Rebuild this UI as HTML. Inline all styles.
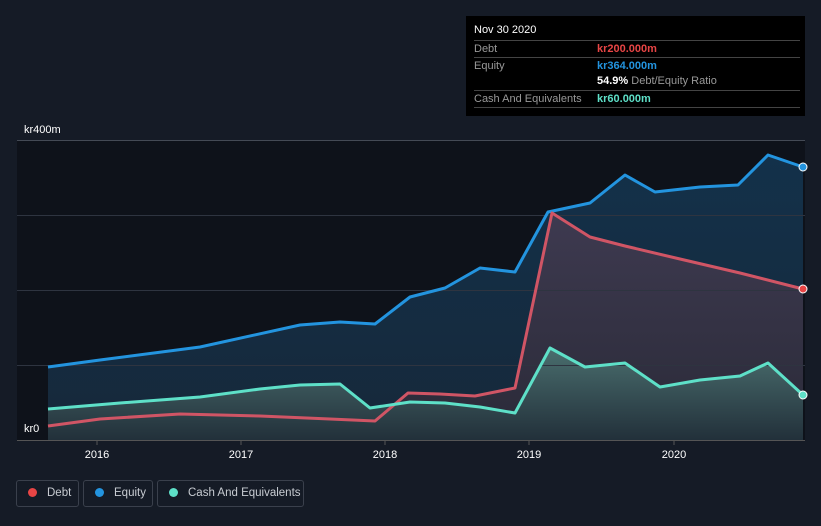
<!DOCTYPE html><html><head><style>
body{margin:0;width:821px;height:526px;background:#151b26;font-family:"Liberation Sans",sans-serif;overflow:hidden;position:relative}
.tt{position:absolute;left:466px;top:16px;width:339px;height:100px;background:#000;color:#fff;font-size:11px}
.row{position:absolute;left:8px;width:326px;border-top:1px solid #444;height:16px;line-height:16px;color:#999}
.lg{position:absolute;top:480px;height:27px;border:1px solid #3a404c;border-radius:3px;color:#c8ccd2;font-size:11.5px;line-height:25px;box-sizing:border-box;white-space:nowrap}
.dot{display:inline-block;width:9px;height:9px;border-radius:50%;margin:0 10px 0 11px;vertical-align:-1px}
</style></head><body>
<svg width="821" height="526" style="position:absolute;left:0;top:0">
<defs>
<linearGradient id="ge" x1="0" y1="0" x2="0" y2="1"><stop offset="0" stop-color="#13314a"/><stop offset="1" stop-color="#16283a"/></linearGradient>
<linearGradient id="gd" x1="0" y1="0" x2="0" y2="1"><stop offset="0" stop-color="#3e3a50"/><stop offset="1" stop-color="#2a2a38"/></linearGradient>
<linearGradient id="gc" x1="0" y1="0" x2="0" y2="1"><stop offset="0" stop-color="#4a6e6e"/><stop offset="1" stop-color="#22303a"/></linearGradient>
</defs>
<rect x="17" y="140" width="788" height="300" fill="#0e121a"/>
<path d="M48,367 L100,360 200,347 300,325 340,322 375,324 410,297 445,288 480,268 515,272 548,212 590,203 625,175 655,192 700,187 738,185 768,155 803,167 L803,440 48,440Z" fill="url(#ge)"/>
<path d="M48,426 L100,419 180,414 260,416 330,419 375,421 408,393 440,394 475,396 515,388 552,213 590,237 625,246 680,259 740,273 803,289 L803,440 48,440Z" fill="url(#gd)"/>
<path d="M48,409 L120,403 200,397 260,389 300,385 340,384 370,408 410,402 445,403 480,407 515,413 550,348 585,367 625,363 660,387 700,380 740,376 768,363 803,395 L803,440 48,440Z" fill="url(#gc)"/>
<g stroke="#2e3440" stroke-width="1"><line x1="17" y1="140.5" x2="805" y2="140.5" stroke="#444a55"/><line x1="17" y1="215.5" x2="805" y2="215.5"/><line x1="17" y1="290.5" x2="805" y2="290.5"/><line x1="17" y1="365.5" x2="805" y2="365.5"/><line x1="17" y1="440.5" x2="805" y2="440.5" stroke="#555"/></g>
<g fill="none" stroke-width="3" stroke-linejoin="round">
<path d="M48,367 L100,360 200,347 300,325 340,322 375,324 410,297 445,288 480,268 515,272 548,212 590,203 625,175 655,192 700,187 738,185 768,155 803,167" stroke="#2394df"/>
<path d="M48,426 L100,419 180,414 260,416 330,419 375,421 408,393 440,394 475,396 515,388 552,213 590,237 625,246 680,259 740,273 803,289" stroke="#d05565"/>
<path d="M48,409 L120,403 200,397 260,389 300,385 340,384 370,408 410,402 445,403 480,407 515,413 550,348 585,367 625,363 660,387 700,380 740,376 768,363 803,395" stroke="#5ee0c8"/>
</g>
<circle cx="803" cy="167" r="4" fill="#2394df" stroke="#fff"/><circle cx="803" cy="289" r="4" fill="#e84545" stroke="#fff"/><circle cx="803" cy="395" r="4" fill="#5ee0c8" stroke="#fff"/>
<g stroke="#555"><line x1="97" y1="440" x2="97" y2="445"/><line x1="241" y1="440" x2="241" y2="445"/><line x1="385" y1="440" x2="385" y2="445"/><line x1="529" y1="440" x2="529" y2="445"/><line x1="674" y1="440" x2="674" y2="445"/></g>
<g fill="#fff" font-size="11" text-anchor="middle"><text x="97" y="458">2016</text><text x="241" y="458">2017</text><text x="385" y="458">2018</text><text x="529" y="458">2019</text><text x="674" y="458">2020</text></g>
<text x="24" y="133" fill="#fff" font-size="11">kr400m</text><text x="24" y="432" fill="#fff" font-size="11">kr0</text>
</svg>
<div class="tt"><div style="position:absolute;left:8px;top:8px">Nov 30 2020</div>
<div class="row" style="top:24px">Debt<span style="position:absolute;left:123px;color:#e84545;font-weight:bold">kr200.000m</span></div>
<div class="row" style="top:41px">Equity<span style="position:absolute;left:123px;color:#2394df;font-weight:bold">kr364.000m</span></div>
<div class="row" style="top:57px;border:0"><span style="position:absolute;left:123px;color:#fff;font-weight:bold">54.9%<span style="color:#999;font-weight:normal"> Debt/Equity Ratio</span></span></div>
<div class="row" style="top:74px">Cash And Equivalents<span style="position:absolute;left:123px;color:#5ee0c8;font-weight:bold">kr60.000m</span></div>
<div class="row" style="top:91px;height:0"></div></div>
<div class="lg" style="left:16px;width:63px"><span class="dot" style="background:#e84545"></span>Debt</div>
<div class="lg" style="left:83px;width:70px"><span class="dot" style="background:#2394df"></span>Equity</div>
<div class="lg" style="left:157px;width:147px"><span class="dot" style="background:#5ee0c8"></span>Cash And Equivalents</div>
</body></html>
